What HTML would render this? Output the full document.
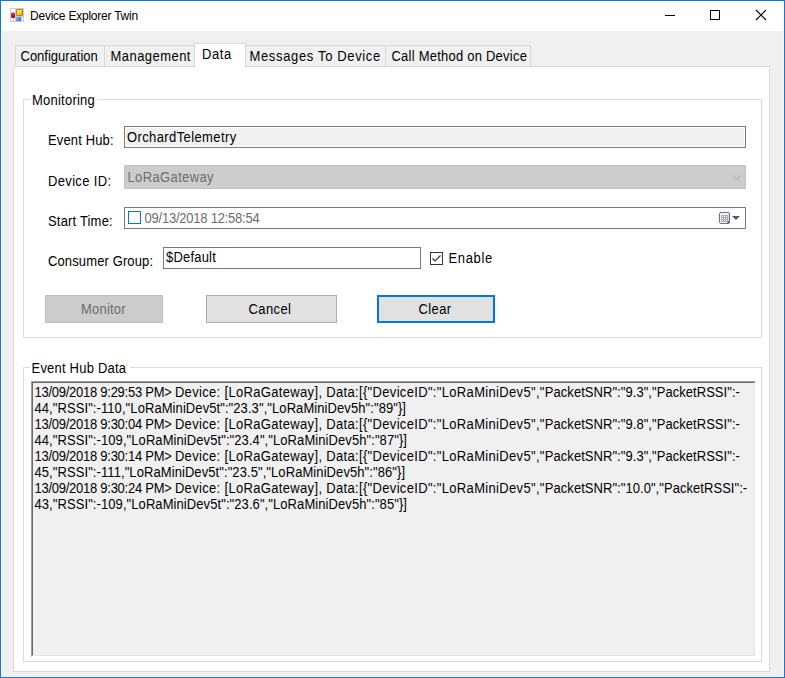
<!DOCTYPE html>
<html><head><meta charset="utf-8">
<style>
*{box-sizing:border-box;margin:0;padding:0}
html,body{width:785px;height:678px;overflow:hidden;background:#f0f0f0}
body{position:relative;font-family:"Liberation Sans",sans-serif;font-size:13px;color:#000}
.a{position:absolute}
.t{position:absolute;white-space:pre;line-height:16px;height:16px;transform:scaleY(1.1);transform-origin:0 13px}
.s1{letter-spacing:-0.26px}.s2{letter-spacing:0.33px}.s3{letter-spacing:0.05px}.s4{letter-spacing:0.08px}
</style></head><body>
<!-- window frame -->
<div class="a" style="left:0;top:0;width:785px;height:678px;border:1px solid #1077d6"></div>
<div class="a" style="left:1px;top:1px;width:783px;height:676px;border-left:1px solid #fcf7f0;border-bottom:1px solid #fcf7f0;border-right:1px solid #fcf7f0"></div>
<!-- title bar -->
<div class="a" style="left:1px;top:1px;width:783px;height:30px;background:#fff"></div>
<!-- icon -->
<div class="a" style="left:10px;top:8px;width:14px;height:14px;background:#cbcbcb"></div>
<div class="a" style="left:11px;top:9px;width:4px;height:3px;background:#fff"></div>
<div class="a" style="left:11px;top:13px;width:4px;height:5px;background:linear-gradient(135deg,#e04040,#a00000);border-radius:1px"></div>
<div class="a" style="left:16px;top:9px;width:7px;height:7px;background:linear-gradient(135deg,#fff0b0,#f8c820 60%,#e0a800);border:1px solid #b08800;border-radius:1px"></div>
<div class="a" style="left:16px;top:17px;width:5px;height:4px;background:linear-gradient(135deg,#8ab8ff,#2e6ad8)"></div>
<div class="a" style="left:11px;top:18px;width:2px;height:3px;background:#fff"></div>
<div class="a" style="left:14px;top:18px;width:1px;height:3px;background:#fff"></div>
<div class="a" style="left:22px;top:17px;width:1px;height:4px;background:#fff"></div>
<div class="t" style="left:30px;top:8px;font-size:12px;letter-spacing:-0.23px;transform:none">Device Explorer Twin</div>
<!-- caption buttons -->
<div class="a" style="left:665px;top:15px;width:10px;height:1px;background:#000"></div>
<div class="a" style="left:710px;top:10px;width:10px;height:10px;border:1px solid #000"></div>
<svg class="a" style="left:755px;top:9px" width="12" height="12" viewBox="0 0 12 12"><path d="M1 1L11 11M11 1L1 11" stroke="#000" stroke-width="1.1"/></svg>

<!-- tabs -->
<div class="a" style="left:15px;top:45px;width:90px;height:22px;border:1px solid #d9d9d9;border-bottom:none;background:#f0f0f0"></div>
<div class="a" style="left:104px;top:45px;width:91px;height:22px;border:1px solid #d9d9d9;border-bottom:none;background:#f0f0f0"></div>
<div class="a" style="left:245px;top:45px;width:141px;height:22px;border:1px solid #d9d9d9;border-bottom:none;background:#f0f0f0"></div>
<div class="a" style="left:385px;top:45px;width:146px;height:22px;border:1px solid #d9d9d9;border-bottom:none;background:#f0f0f0"></div>
<!-- tab page -->
<div class="a" style="left:13px;top:66px;width:757px;height:606px;border:1px solid #d9d9d9;background:#fff"></div>
<div class="a" style="left:194px;top:43px;width:52px;height:24px;border:1px solid #d9d9d9;border-bottom:none;background:#fff"></div>
<div class="t" style="left:20.5px;top:49px">Configuration</div>
<div class="t" style="left:110.5px;top:49px;letter-spacing:0.45px">Management</div>
<div class="t" style="left:202px;top:47px;letter-spacing:0.6px">Data</div>
<div class="t" style="left:249.5px;top:49px;letter-spacing:0.65px">Messages To Device</div>
<div class="t" style="left:391.5px;top:49px;letter-spacing:0.23px">Call Method on Device</div>

<!-- Monitoring group -->
<div class="a" style="left:23px;top:99px;width:739px;height:239px;border:1px solid #dcdcdc"></div>
<div class="a" style="left:30px;top:95px;width:67px;height:8px;background:#fff"></div>
<div class="t" style="left:32px;top:93px;letter-spacing:0.23px">Monitoring</div>

<div class="t" style="left:48px;top:133px;letter-spacing:0.14px">Event Hub:</div>
<div class="a" style="left:124px;top:126px;width:622px;height:22px;border:1px solid #7a7a7a;background:#f0f0f0;box-shadow:inset 0 0 0 1px #fff"></div>
<div class="t" style="left:127px;top:130px;letter-spacing:0.39px">OrchardTelemetry</div>

<div class="t" style="left:48px;top:174px;letter-spacing:0.34px">Device ID:</div>
<div class="a" style="left:124px;top:165px;width:622px;height:24px;background:#cccccc;border:1px solid #c2c2c2"></div>
<div class="t" style="left:127.5px;top:170px;color:#6d6d6d;letter-spacing:0.37px">LoRaGateway</div>
<svg class="a" style="left:730px;top:172px" width="14" height="10" viewBox="0 0 14 10"><path d="M3 3.5L7 7.5L11 3.5" stroke="#a9a9a9" fill="none" stroke-width="1"/></svg>

<div class="t" style="left:48px;top:214px;letter-spacing:0.18px">Start Time:</div>
<div class="a" style="left:124px;top:207px;width:622px;height:22px;border:1px solid #7a7a7a;background:#fff"></div>
<div class="a" style="left:128px;top:211px;width:13px;height:13px;border:1px solid #0078d7;background:#fff"></div>
<div class="t" style="left:144.5px;top:211px;color:#6d6d6d;letter-spacing:-0.23px">09/13/2018 12:58:54</div>
<svg class="a" style="left:718px;top:211px" width="14" height="15" viewBox="0 0 14 15" shape-rendering="crispEdges"><rect x="1.5" y="1.5" width="10" height="11" rx="1.5" fill="#f7f8fc" stroke="#7b6d6d" stroke-width="1" shape-rendering="auto"/><rect x="3" y="4" width="7" height="7" fill="#a9adb6"/><rect x="4" y="5" width="1" height="1" fill="#f4f5f8"/><rect x="4" y="7" width="1" height="1" fill="#f4f5f8"/><rect x="4" y="9" width="1" height="1" fill="#f4f5f8"/><rect x="6" y="5" width="1" height="1" fill="#f4f5f8"/><rect x="6" y="7" width="1" height="1" fill="#f4f5f8"/><rect x="6" y="9" width="1" height="1" fill="#f4f5f8"/><rect x="8" y="5" width="1" height="1" fill="#f4f5f8"/><rect x="8" y="7" width="1" height="1" fill="#f4f5f8"/><rect x="8" y="9" width="1" height="1" fill="#f4f5f8"/><rect x="10" y="3" width="1" height="9" fill="#cfd9ee"/><rect x="10" y="11" width="1" height="1" fill="#3a3a3a"/><rect x="9" y="11" width="1" height="1" fill="#8a8a8a"/><rect x="10" y="10" width="1" height="1" fill="#8a8a8a"/></svg>
<svg class="a" style="left:731px;top:215px" width="10" height="6" viewBox="0 0 10 6"><path d="M1 1H9L5 5Z" fill="#3b5a8e"/></svg>

<div class="t" style="left:48px;top:254px;letter-spacing:0.12px">Consumer Group:</div>
<div class="a" style="left:163px;top:247px;width:258px;height:22px;border:1px solid #7a7a7a;background:#fff"></div>
<div class="t" style="left:166px;top:250px;letter-spacing:0.2px">$Default</div>
<div class="a" style="left:430px;top:252px;width:13px;height:13px;border:1px solid #333;background:#fff"></div>
<svg class="a" style="left:430px;top:252px" width="13" height="13" viewBox="0 0 13 13"><path d="M2.5 6.5L5 9L10.5 3.5" stroke="#333" fill="none" stroke-width="1.2"/></svg>
<div class="t" style="left:448.5px;top:251px;letter-spacing:0.64px">Enable</div>

<!-- buttons -->
<div class="a" style="left:45px;top:295px;width:118px;height:28px;border:1px solid #bfbfbf;background:#cccccc"></div>
<div class="t" style="left:81px;top:302px;color:#6d6d6d;letter-spacing:0.2px">Monitor</div>
<div class="a" style="left:206px;top:295px;width:131px;height:28px;border:1px solid #adadad;background:#e1e1e1"></div>
<div class="t" style="left:248.5px;top:302px;letter-spacing:0.4px">Cancel</div>
<div class="a" style="left:377px;top:295px;width:118px;height:28px;border:2px solid #0078d7;background:#e1e1e1"></div>
<div class="t" style="left:418.5px;top:302px;letter-spacing:0.4px">Clear</div>

<!-- Event Hub Data group -->
<div class="a" style="left:23px;top:367px;width:739px;height:295px;border:1px solid #dcdcdc"></div>
<div class="a" style="left:30px;top:362px;width:100px;height:8px;background:#fff"></div>
<div class="t" style="left:31.5px;top:361px;letter-spacing:0.21px">Event Hub Data</div>
<div class="a" style="left:31px;top:381px;width:725px;height:276px;background:#f0f0f0;border-top:1px solid #a0a0a0;border-left:1px solid #a0a0a0;border-right:1px solid #fff;border-bottom:1px solid #fff"></div>
<div class="a" style="left:32px;top:382px;width:723px;height:274px;border-top:1px solid #696969;border-left:1px solid #696969;border-right:1px solid #e3e3e3;border-bottom:1px solid #e3e3e3"></div>
<div class="a" style="left:34.5px;top:386px;line-height:14.5454px;white-space:pre;font-size:13px;transform:scaleY(1.1);transform-origin:0 13px"><span class="s1">13/09/2018 9:29:53 PM&gt; </span><span class="s2">Device: [LoRaGateway], Data:[{"DeviceID":"LoRaMiniDev5","</span><span class="s3">PacketSNR":"9.3","PacketRSSI":-</span>
<span class="s4">44,"RSSI":-110,"LoRaMiniDev5t":"23.3","LoRaMiniDev5h":"89"}]</span>
<span class="s1">13/09/2018 9:30:04 PM&gt; </span><span class="s2">Device: [LoRaGateway], Data:[{"DeviceID":"LoRaMiniDev5","</span><span class="s3">PacketSNR":"9.8","PacketRSSI":-</span>
<span class="s4">44,"RSSI":-109,"LoRaMiniDev5t":"23.4","LoRaMiniDev5h":"87"}]</span>
<span class="s1">13/09/2018 9:30:14 PM&gt; </span><span class="s2">Device: [LoRaGateway], Data:[{"DeviceID":"LoRaMiniDev5","</span><span class="s3">PacketSNR":"9.3","PacketRSSI":-</span>
<span class="s4">45,"RSSI":-111,"LoRaMiniDev5t":"23.5","LoRaMiniDev5h":"86"}]</span>
<span class="s1">13/09/2018 9:30:24 PM&gt; </span><span class="s2">Device: [LoRaGateway], Data:[{"DeviceID":"LoRaMiniDev5","</span><span class="s3">PacketSNR":"10.0","PacketRSSI":-</span>
<span class="s4">43,"RSSI":-109,"LoRaMiniDev5t":"23.6","LoRaMiniDev5h":"85"}]</span></div>
</body></html>
